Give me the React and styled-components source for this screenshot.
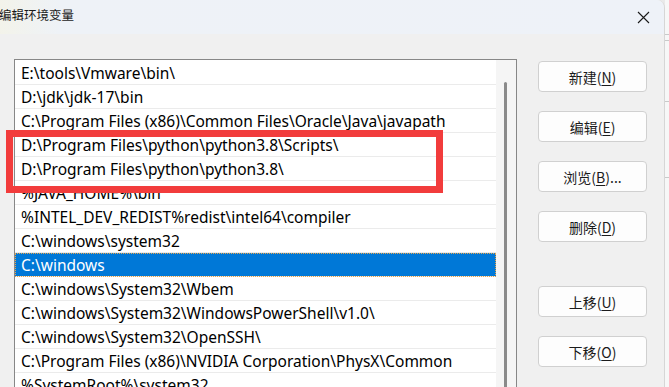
import React from 'react';
import styled, { createGlobalStyle } from 'styled-components';

const GlobalStyle = createGlobalStyle`
	html, body {
		margin: 0;
		padding: 0;
		overflow: hidden;
		background: #e9e9e9;
	}
`;

const Screen = styled.div`
	display: flex;
	width: 669px;
	height: 387px;
	overflow: hidden;
`;

const Window = styled.div`
	display: flex;
	flex-direction: column;

	width: 665px;
	height: 387px;
	border-top-right-radius: 8px;
	border-right: 1px solid #d6d6d6;
	box-sizing: border-box;
	overflow: hidden;

	background: #f0f0f0;
	font-family: 'Noto Sans', 'Noto Sans CJK SC', sans-serif;
`;

const Behind = styled.div`
	display: flex;
	flex-direction: column;
	flex: 1;
	background: #f7f7f7;
`;

const BehindLine = styled.div`
	height: ${({ h }) => h}px;
	border-bottom: 1px solid #c9c9c9;
`;

const TitleBar = styled.div`
	display: flex;
	justify-content: space-between;
	align-items: center;

	height: 34px;
	padding: 0 14px 0 0;
	flex-shrink: 0;

	background: linear-gradient(90deg, #f3f3ea 0, #eef2f7 60px, #eef2f8 100%);
`;

const Title = styled.span`
	font-family: 'Noto Sans CJK SC', sans-serif;
	font-size: 12.5px;
	color: #1a1a1a;
	margin-left: -1px;
	margin-top: -5px;
`;

const Body = styled.div`
	display: flex;
	gap: 21px;
	padding: 25px 0 0 14px;
	flex: 1;
	min-height: 0;
`;

const ListBox = styled.div`
	position: relative;
	display: flex;

	width: 503px;
	height: 340px;
	box-sizing: border-box;
	border: 1px solid #878787;
	border-bottom: none;

	background: #fff;
`;

const Rows = styled.div`
	display: flex;
	flex-direction: column;
	width: 481px;
	padding-top: 1px;
	overflow: hidden;
`;

const Row = styled.div`
	display: flex;
	align-items: center;
	flex-shrink: 0;

	height: 23px;
	padding-left: 6px;
	border-bottom: 1px solid #ebebeb;
	box-sizing: content-box;

	font-size: 15.5px;
	white-space: nowrap;
	color: ${({ selected }) => (selected ? '#fff' : '#000')};
	background: ${({ selected }) => (selected ? '#0078d7' : 'transparent')};
	outline: ${({ selected }) => (selected ? '1px dotted #e8a64e' : 'none')};
	outline-offset: -1px;
`;

const ScrollTrack = styled.div`
	position: relative;
	width: 20px;
	background: #f5f5f5;
`;

const Thumb = styled.div`
	position: absolute;
	left: 8px;
	top: 22px;
	bottom: 0;
	width: 3px;
	border-radius: 2px 2px 0 0;
	background: #8a8a8a;
`;

const Annotation = styled.div`
	position: absolute;
	left: -9px;
	top: 70px;
	width: 437px;
	height: 63px;
	box-sizing: border-box;
	border: 7px solid #f23c3c;
	pointer-events: none;
`;

const Buttons = styled.div`
	display: flex;
	flex-direction: column;
	gap: 19px;
	padding-top: 2px;
`;

const Button = styled.button`
	display: flex;
	justify-content: center;
	align-items: center;

	width: 109px;
	height: 31px;
	margin-top: ${({ spaced }) => (spaced ? '25px' : '0')};
	padding: 0;
	border: 1px solid #d0d0d0;
	border-radius: 4px;

	background: #fdfdfd;
	font-family: 'Noto Sans CJK SC', sans-serif;
	font-size: 14px;
	color: #1b1b1b;
`;

const Key = styled.span`
	text-decoration: underline;
	text-underline-offset: 2px;
`;

const paths = [
	'E:\\tools\\Vmware\\bin\\',
	'D:\\jdk\\jdk-17\\bin',
	'C:\\Program Files (x86)\\Common Files\\Oracle\\Java\\javapath',
	'D:\\Program Files\\python\\python3.8\\Scripts\\',
	'D:\\Program Files\\python\\python3.8\\',
	'%JAVA_HOME%\\bin',
	'%INTEL_DEV_REDIST%redist\\intel64\\compiler',
	'C:\\windows\\system32',
	'C:\\windows',
	'C:\\windows\\System32\\Wbem',
	'C:\\windows\\System32\\WindowsPowerShell\\v1.0\\',
	'C:\\windows\\System32\\OpenSSH\\',
	'C:\\Program Files (x86)\\NVIDIA Corporation\\PhysX\\Common',
	'%SystemRoot%\\system32',
];

const actions = [
	{ label: '新建', key: 'N' },
	{ label: '编辑', key: 'E' },
	{ label: '浏览', key: 'B', tail: '...' },
	{ label: '删除', key: 'D' },
	{ label: '上移', key: 'U', spaced: true },
	{ label: '下移', key: 'O' },
];

function CloseIcon() {
	return (
		<svg width="13" height="13" viewBox="0 0 13 13">
			<path d="M1 1 L12 12 M12 1 L1 12" stroke="#1a1a1a" strokeWidth="1.1" />
		</svg>
	);
}

export default function App() {
	return (
		<Screen>
			<GlobalStyle />
			<Window>
				<TitleBar>
					<Title>编辑环境变量</Title>
					<CloseIcon />
				</TitleBar>
				<Body>
					<ListBox>
						<Rows>
							{paths.map((p, i) => (
								<Row key={i} selected={i === 8}>
									{p}
								</Row>
							))}
						</Rows>
						<ScrollTrack>
							<Thumb />
						</ScrollTrack>
						<Annotation />
					</ListBox>
					<Buttons>
						{actions.map((a) => (
							<Button key={a.key} spaced={a.spaced}>
								{a.label}(<Key>{a.key}</Key>){a.tail}
							</Button>
						))}
					</Buttons>
				</Body>
			</Window>
			<Behind>
				<BehindLine h={34} />
				<BehindLine h={5} />
				<BehindLine h={60} />
				<BehindLine h={75} />
			</Behind>
		</Screen>
	);
}
